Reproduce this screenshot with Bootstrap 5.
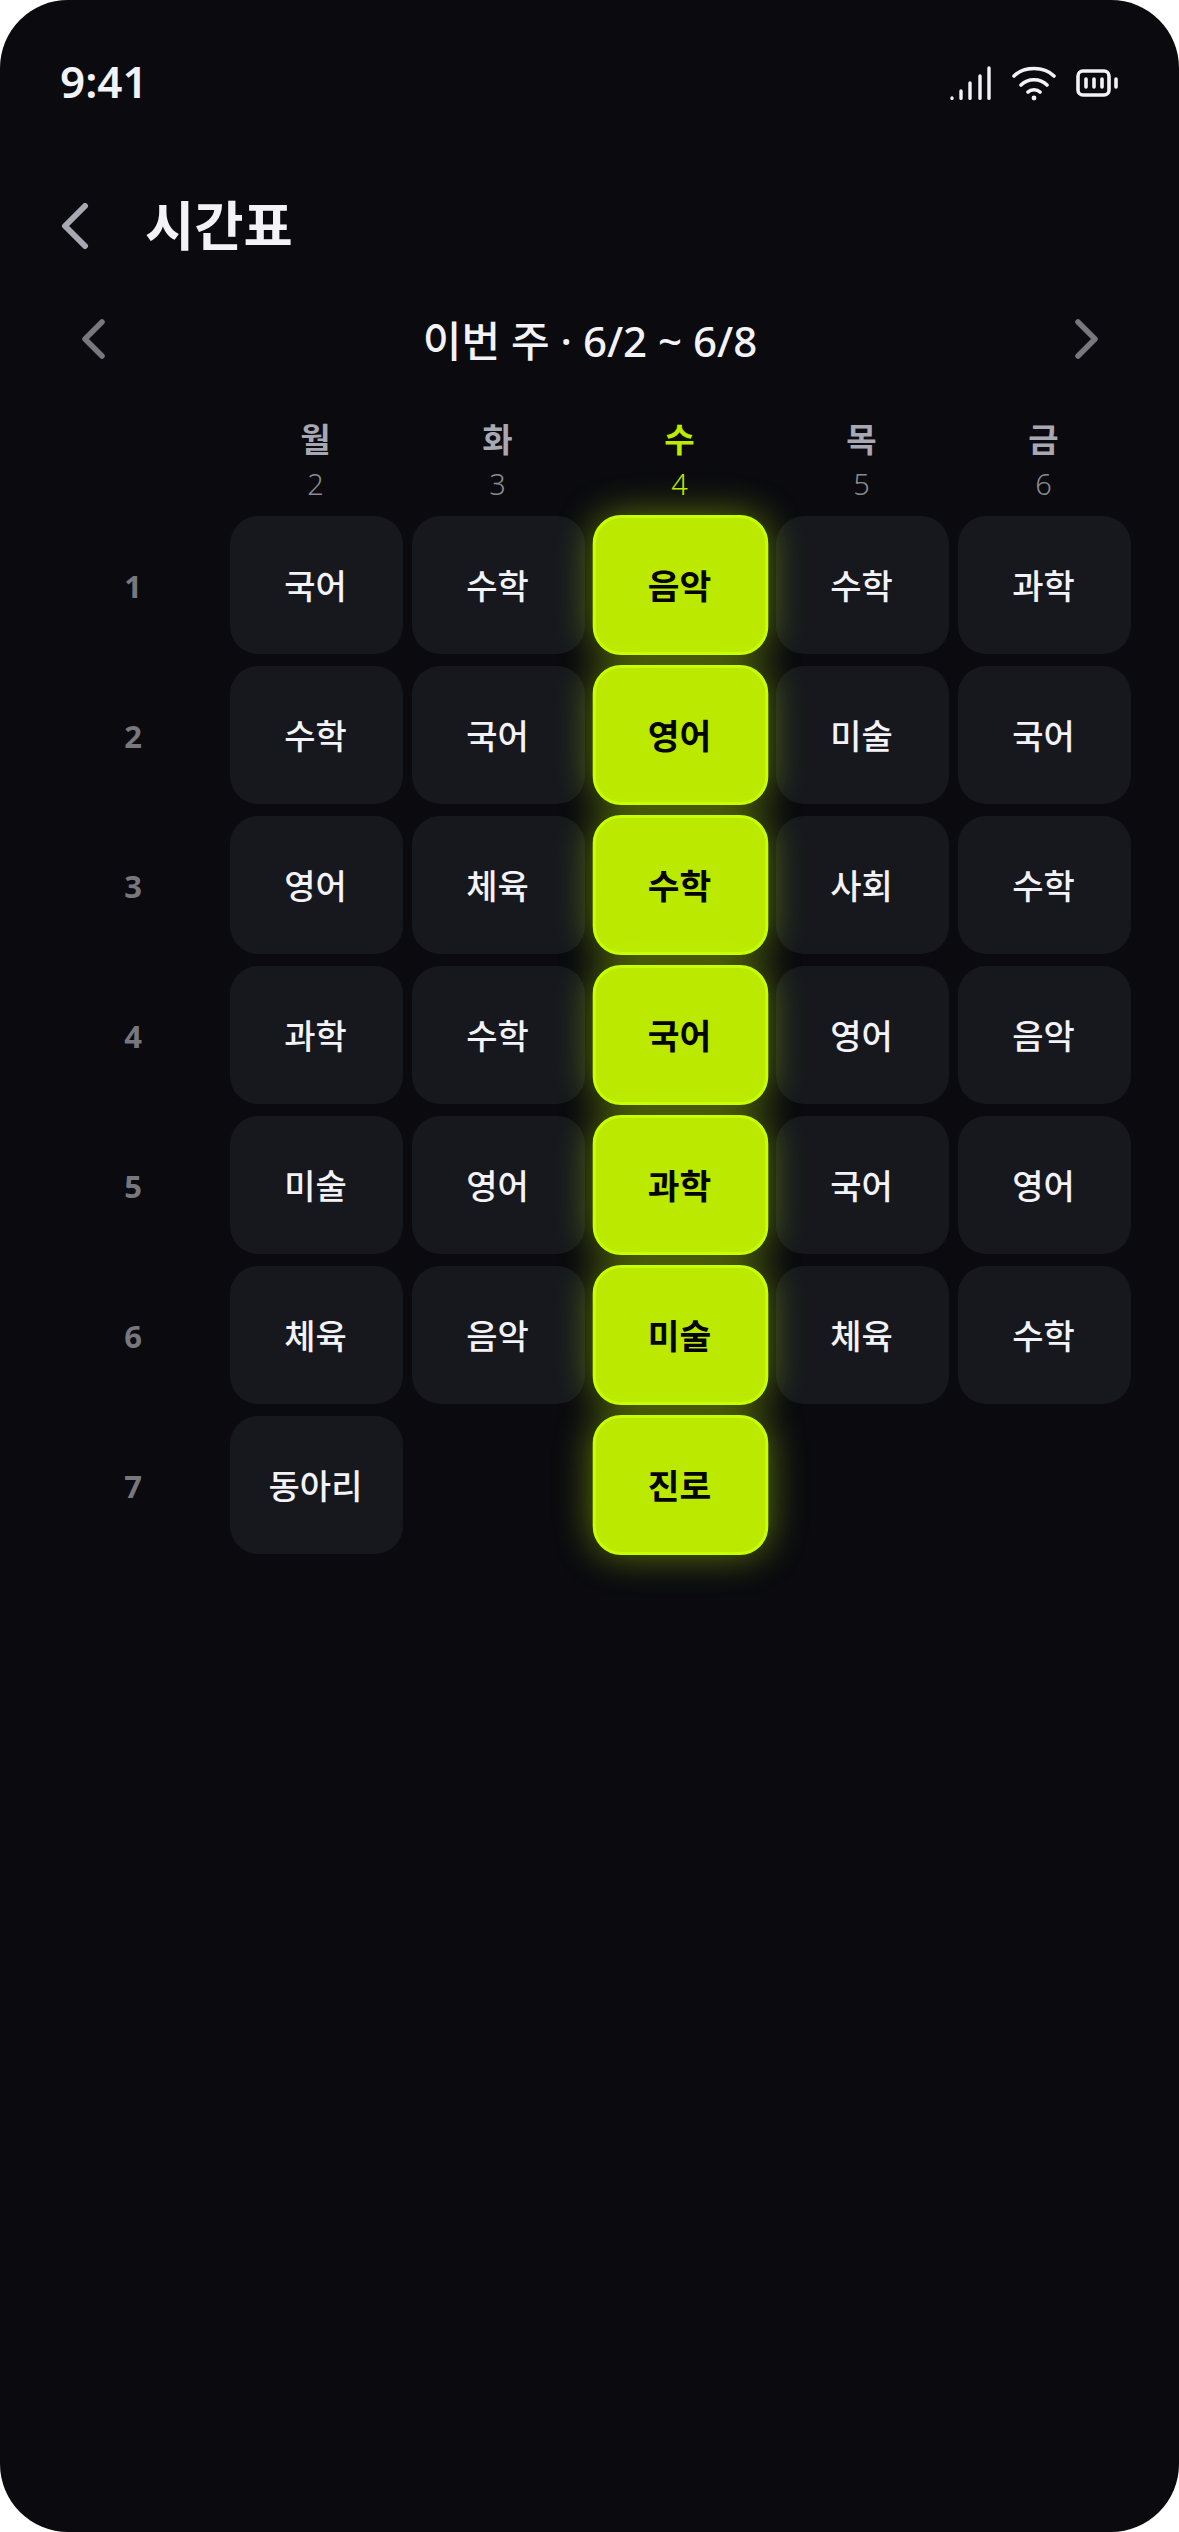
<!DOCTYPE html>
<html lang="ko">
<head>
<meta charset="utf-8">
<title>시간표</title>
<link href="https://cdn.jsdelivr.net/npm/bootstrap@5.3.0/dist/css/bootstrap.min.css" rel="stylesheet">
<style>
html,body{margin:0;background:#fff}
body{font-family:"Noto Sans","Noto Sans CJK KR",sans-serif;width:1179px;height:2532px;overflow:hidden}
.phone{width:1179px;height:2532px;background:#0a0a0f;border-radius:68px;color:#f2f2f7;overflow:hidden}
.statusbar{height:166px;padding:54px 60px 0 60px}
.clock{font-size:44px;font-weight:600;line-height:54px;color:#f2f2f7}
.sicons{height:54px;gap:19px;margin-top:2px}
.sicons svg{display:block}
.apphead{height:120px;padding-left:61px;gap:56px}
.apptitle{font-size:53.5px;font-weight:700;line-height:60px;margin:0;color:#f2f2f7}
.weeknav{height:106px;padding:0 80px 0 81px}
.weeklabel{font-size:42px;font-weight:500;line-height:50px;color:#f2f2f7;padding-top:3px}
.tgrid{display:grid;grid-template-columns:176px repeat(5,173px);column-gap:9px;row-gap:12px;padding-left:45px;margin-top:-3px}
.dayhead{height:115px;text-align:center;padding:29px 2px 0 0}
.dayname{font-size:33px;font-weight:600;line-height:44px;color:#a8a8b2}
.daynum{font-size:29px;font-weight:300;line-height:44px;color:#8a8a92}
.dayhead.now .dayname,.dayhead.now .daynum{color:#bcea00}
.perlabel{font-size:31px;font-weight:700;color:#77777d;padding-top:2px}
.slot{height:138px;border-radius:28px;background:#16181d;font-size:34px;font-weight:500;color:#f2f2f7;padding:3px 2px 0 0}
.slot.now{background:#bbea00;border:3px solid #c8ff00;color:#050505;font-weight:700;transform:scale(1.015);box-shadow:0 0 38px rgba(200,255,0,.45)}
</style>
</head>
<body>
<div class="phone">
  <div class="statusbar d-flex justify-content-between align-items-start">
    <div class="clock">9:41</div>
    <div class="sicons d-flex align-items-center">
      <svg width="44" height="36" viewBox="0 0 44 36" fill="none" stroke="#f2f2f7" stroke-width="3.4" stroke-linecap="round"><path d="M3 33v.4M12 26v7.4M21 18v15.4M31 11v22.4M40 3v30.4"/></svg>
      <svg width="44" height="36" viewBox="0 0 44 36" fill="none" stroke="#f2f2f7" stroke-width="3.6" stroke-linecap="round"><path d="M2 11C12 1 32 1 42 11M9 20C16 13 28 13 35 20M16 27C19 24 25 24 28 27"/><circle cx="22" cy="33" r="2.4" fill="#f2f2f7" stroke="none"/></svg>
      <svg width="44" height="30" viewBox="0 0 44 30" fill="none" stroke="#f2f2f7" stroke-linecap="round"><rect x="3" y="3" width="31" height="24" rx="5" stroke-width="3.6"/><path d="M11 11v8M19 11v8M27 11v8M41 11v8" stroke-width="3.6"/></svg>
    </div>
  </div>
  <div class="apphead d-flex align-items-center">
    <svg width="28" height="46" viewBox="0 0 28 46" fill="none" stroke="#a8a8b2" stroke-width="6" stroke-linecap="round" stroke-linejoin="round"><path d="M24 3 4 23l20 20"/></svg>
    <h1 class="apptitle">시간표</h1>
  </div>
  <div class="weeknav d-flex align-items-center justify-content-between">
    <svg width="24" height="40" viewBox="0 0 24 40" fill="none" stroke="#77777d" stroke-width="5.5" stroke-linecap="round" stroke-linejoin="round"><path d="M21 3 4 20l17 17"/></svg>
    <div class="weeklabel">이번 주 · 6/2 ~ 6/8</div>
    <svg width="24" height="40" viewBox="0 0 24 40" fill="none" stroke="#77777d" stroke-width="5.5" stroke-linecap="round" stroke-linejoin="round"><path d="M3 3l17 17L3 37"/></svg>
  </div>
  <div class="tgrid">
    <div></div>
    <div class="dayhead"><div class="dayname">월</div><div class="daynum">2</div></div>
    <div class="dayhead"><div class="dayname">화</div><div class="daynum">3</div></div>
    <div class="dayhead now"><div class="dayname">수</div><div class="daynum">4</div></div>
    <div class="dayhead"><div class="dayname">목</div><div class="daynum">5</div></div>
    <div class="dayhead"><div class="dayname">금</div><div class="daynum">6</div></div>

    <div class="perlabel d-flex align-items-center justify-content-center">1</div>
    <div class="slot d-flex align-items-center justify-content-center">국어</div>
    <div class="slot d-flex align-items-center justify-content-center">수학</div>
    <div class="slot now d-flex align-items-center justify-content-center">음악</div>
    <div class="slot d-flex align-items-center justify-content-center">수학</div>
    <div class="slot d-flex align-items-center justify-content-center">과학</div>

    <div class="perlabel d-flex align-items-center justify-content-center">2</div>
    <div class="slot d-flex align-items-center justify-content-center">수학</div>
    <div class="slot d-flex align-items-center justify-content-center">국어</div>
    <div class="slot now d-flex align-items-center justify-content-center">영어</div>
    <div class="slot d-flex align-items-center justify-content-center">미술</div>
    <div class="slot d-flex align-items-center justify-content-center">국어</div>

    <div class="perlabel d-flex align-items-center justify-content-center">3</div>
    <div class="slot d-flex align-items-center justify-content-center">영어</div>
    <div class="slot d-flex align-items-center justify-content-center">체육</div>
    <div class="slot now d-flex align-items-center justify-content-center">수학</div>
    <div class="slot d-flex align-items-center justify-content-center">사회</div>
    <div class="slot d-flex align-items-center justify-content-center">수학</div>

    <div class="perlabel d-flex align-items-center justify-content-center">4</div>
    <div class="slot d-flex align-items-center justify-content-center">과학</div>
    <div class="slot d-flex align-items-center justify-content-center">수학</div>
    <div class="slot now d-flex align-items-center justify-content-center">국어</div>
    <div class="slot d-flex align-items-center justify-content-center">영어</div>
    <div class="slot d-flex align-items-center justify-content-center">음악</div>

    <div class="perlabel d-flex align-items-center justify-content-center">5</div>
    <div class="slot d-flex align-items-center justify-content-center">미술</div>
    <div class="slot d-flex align-items-center justify-content-center">영어</div>
    <div class="slot now d-flex align-items-center justify-content-center">과학</div>
    <div class="slot d-flex align-items-center justify-content-center">국어</div>
    <div class="slot d-flex align-items-center justify-content-center">영어</div>

    <div class="perlabel d-flex align-items-center justify-content-center">6</div>
    <div class="slot d-flex align-items-center justify-content-center">체육</div>
    <div class="slot d-flex align-items-center justify-content-center">음악</div>
    <div class="slot now d-flex align-items-center justify-content-center">미술</div>
    <div class="slot d-flex align-items-center justify-content-center">체육</div>
    <div class="slot d-flex align-items-center justify-content-center">수학</div>

    <div class="perlabel d-flex align-items-center justify-content-center">7</div>
    <div class="slot d-flex align-items-center justify-content-center">동아리</div>
    <div></div>
    <div class="slot now d-flex align-items-center justify-content-center">진로</div>
  </div>
</div>
<script src="https://cdn.jsdelivr.net/npm/bootstrap@5.3.0/dist/js/bootstrap.bundle.min.js"></script>
</body>
</html>
